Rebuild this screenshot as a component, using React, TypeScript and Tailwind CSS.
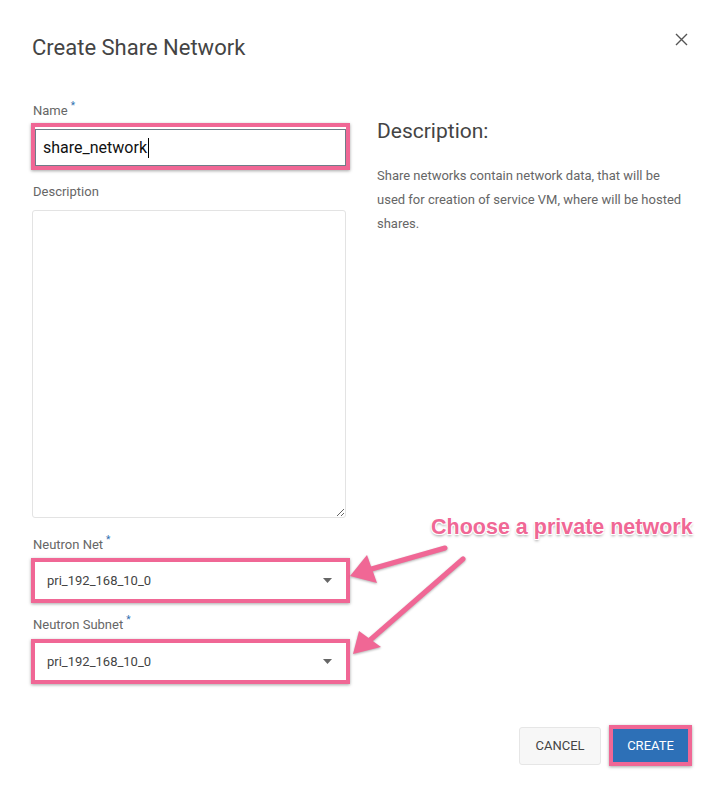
import React from 'react';

const PINK = '#f06795';

function Label({ text, required }: { text: string; required?: boolean }) {
  return (
    <div className="h-[16px] text-[13px] leading-[16px] text-[#666] ml-px">
      {text}
      {required && (
        <span className="text-[#2f6fb0] text-[10px] leading-none ml-[3px] relative -top-[6px]">*</span>
      )}
    </div>
  );
}

function PinkBox({ children, className = '' }: { children: React.ReactNode; className?: string }) {
  return (
    <div
      className={`-ml-px w-[319px] border-[4px] border-[#f06795] shadow-[0_1px_3px_rgba(0,0,0,0.35)] ${className}`}
    >
      {children}
    </div>
  );
}

function Select({ value }: { value: string }) {
  return (
    <div className="flex h-[37px] items-center justify-between bg-white pl-[12px] pr-[14px] text-[13px] text-[#444]">
      <span>{value}</span>
      <svg width="9" height="5" viewBox="0 0 9 5">
        <path d="M0 0 L9 0 L4.5 5 Z" fill="#666" />
      </svg>
    </div>
  );
}

export default function App() {
  return (
    <div className="relative w-[724px] h-[801px] bg-white font-['Roboto','Liberation_Sans',sans-serif] overflow-hidden">
      {/* header */}
      <div className="flex items-start justify-between pt-[34px] pl-[32px] pr-[36px]">
        <h1 className="text-[22px] leading-[28px] font-normal text-[#444]">Create Share Network</h1>
        <button className="mt-[-1px] text-[#555]" aria-label="close">
          <svg width="13" height="13" viewBox="0 0 13 13">
            <path d="M1 1 L12 12 M12 1 L1 12" stroke="#555" strokeWidth="1.4" />
          </svg>
        </button>
      </div>

      {/* body */}
      <div className="flex mt-[41px] pl-[32px]">
        <div className="w-[314px] flex flex-col">
          <Label text="Name" required />
          <PinkBox className="mt-[4px] pt-[2px]">
            <div className="h-[37px] flex items-center border border-[#6f7c88] bg-white pl-[7px] text-[16px] text-[#111]">
              share_network
              <span className="inline-block w-px h-[20px] bg-black ml-px" />
            </div>
          </PinkBox>

          <div className="mt-[14px]">
            <Label text="Description" />
          </div>
          <textarea
            className="mt-[10px] h-[308px] w-[314px] border border-[#e3e3e3] rounded-[3px] resize-y outline-none"
            readOnly
          />

          <div className="mt-[19px]">
            <Label text="Neutron Net" required />
          </div>
          <PinkBox className="mt-[5px]">
            <Select value="pri_192_168_10_0" />
          </PinkBox>

          <div className="mt-[14px]">
            <Label text="Neutron Subnet" required />
          </div>
          <PinkBox className="mt-[6px]">
            <Select value="pri_192_168_10_0" />
          </PinkBox>
        </div>

        <div className="ml-[31px] mt-[14px] w-[310px]">
          <h2 className="text-[21px] leading-[28px] font-normal text-[#444]">Description:</h2>
          <p className="mt-[19px] text-[13px] leading-[24px] text-[#666]">
            Share networks contain network data, that will be used for creation of service VM, where will be hosted
            shares.
          </p>
        </div>
      </div>

      {/* footer */}
      <div className="flex items-center justify-end gap-[8px] mt-[41px] pr-[32px]">
        <button className="h-[38px] w-[82px] rounded-[3px] border border-[#e6e6e6] bg-[#f7f7f7] text-[13px] text-[#444]">
          CANCEL
        </button>
        <div className="border-[4px] border-[#f06795] shadow-[0_1px_3px_rgba(0,0,0,0.35)]">
          <button className="h-[33px] w-[75px] bg-[#2d70b7] text-[13px] text-white">CREATE</button>
        </div>
      </div>

      {/* annotation overlay */}
      <svg
        className="absolute left-0 top-0 pointer-events-none [filter:drop-shadow(0_1px_1px_rgba(0,0,0,0.3))]"
        width="724"
        height="801"
      >
        <line x1="445" y1="548" x2="368" y2="570" stroke={PINK} strokeWidth="5" strokeLinecap="round" />
        <polygon points="350,576 367,555 377,583" fill={PINK} />
        <line x1="463" y1="559" x2="369" y2="641" stroke={PINK} strokeWidth="5" strokeLinecap="round" />
        <polygon points="353,654 359,631 381,647" fill={PINK} />
      </svg>
      <div
        className="absolute left-[431px] top-[513px] text-[21.5px] leading-[28px] font-bold text-[#f06795] font-['Liberation_Sans',sans-serif] [text-shadow:-1px_-1px_0_#fff,1px_-1px_0_#fff,-1px_1px_0_#fff,1px_1px_0_#fff,0_2px_3px_rgba(0,0,0,0.4)]"
      >
        Choose a private network
      </div>
    </div>
  );
}
